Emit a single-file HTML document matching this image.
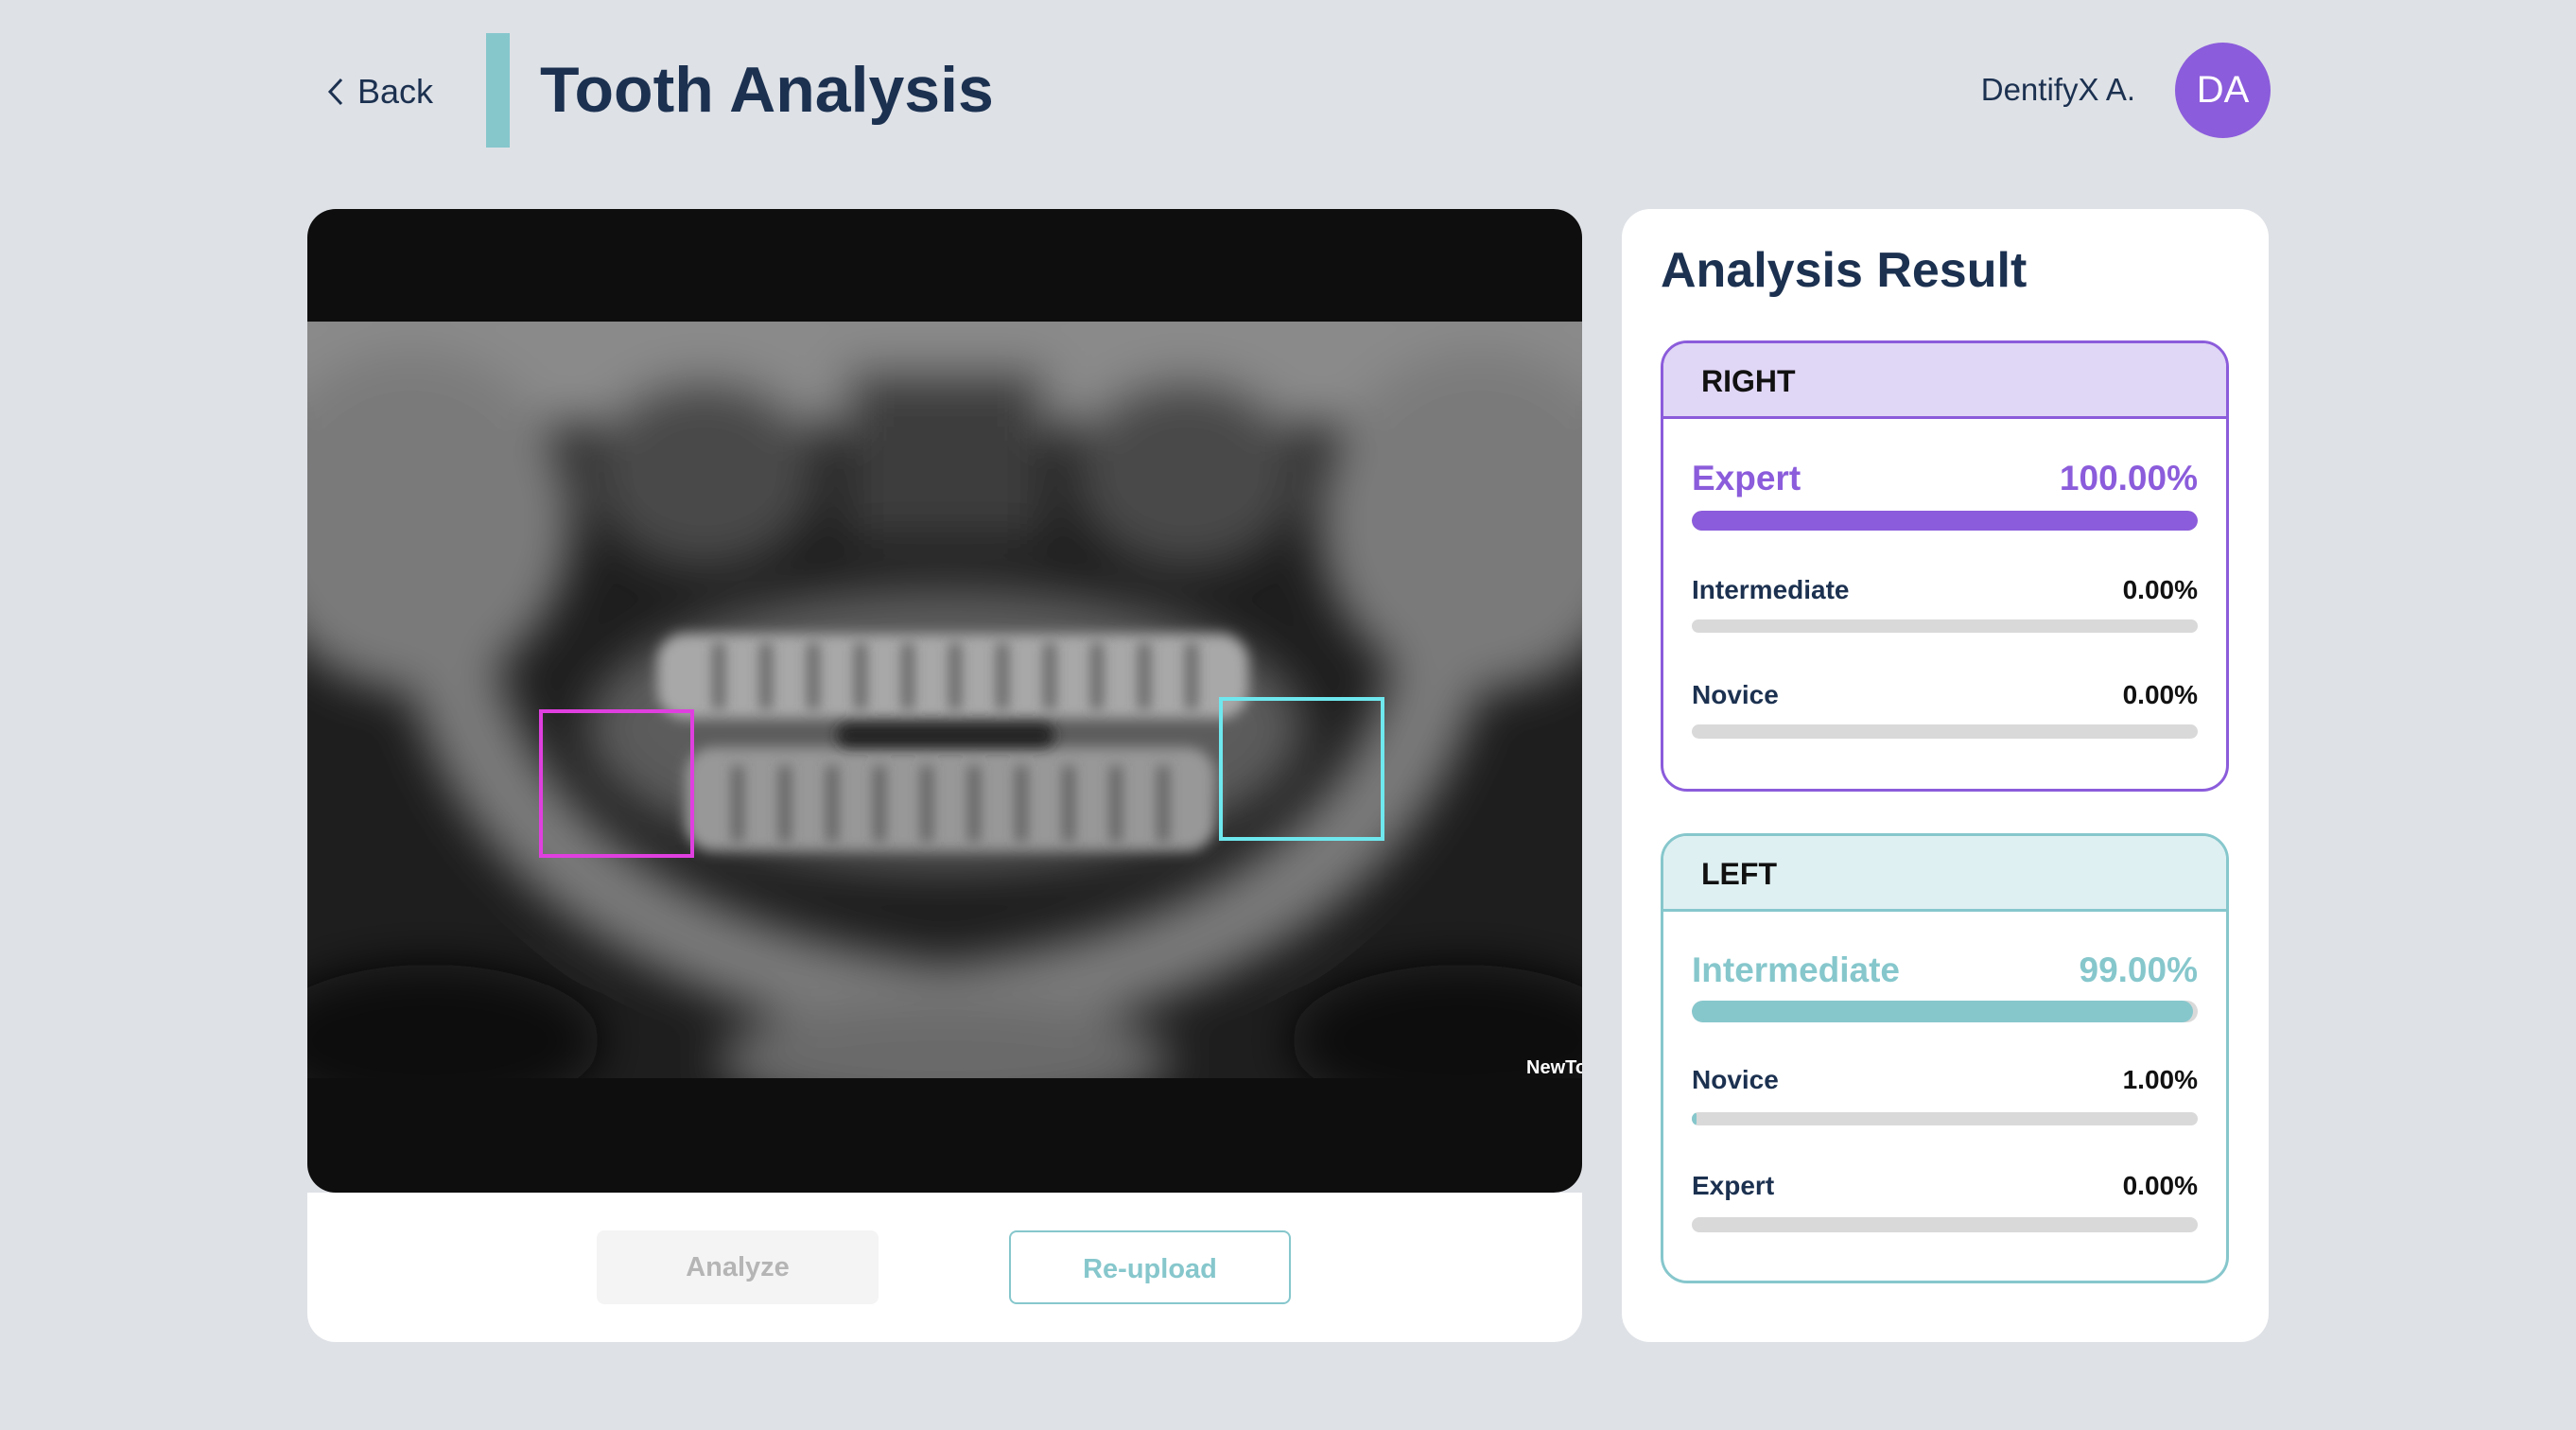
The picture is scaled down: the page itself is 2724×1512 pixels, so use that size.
<!DOCTYPE html>
<html><head><meta charset="utf-8"><style>
*{margin:0;padding:0;box-sizing:border-box}
body{width:2724px;height:1512px;background:#dee1e6;font-family:"Liberation Sans",sans-serif;position:relative;overflow:hidden;color:#1c3150}
.abs{position:absolute}
.back{left:344px;top:76px;font-size:36px;color:#1c3150}
.bar{left:514px;top:35px;width:25px;height:121px;background:#86c7cc}
.title{left:571px;top:56px;font-size:68px;font-weight:bold;letter-spacing:0px}
.user{right:466px;top:76px;font-size:33px}
.av{left:2300px;top:45px;width:101px;height:101px;border-radius:50%;background:#8b5cdb;color:#fff;font-size:40px;line-height:101px;text-align:center}
.img{left:325px;top:221px;width:1348px;height:1040px;background:#0e0e0e;border-radius:30px;overflow:hidden}
.xray{position:absolute;left:0;top:119px;width:1348px;height:800px;background:#1e1e1e;overflow:hidden}
.box{position:absolute;border:4px solid}
.bot{left:325px;top:1261px;width:1348px;height:158px;background:#fff;border-radius:0 0 30px 30px}
.btn{position:absolute;top:1301px;width:298px;height:78px;border-radius:8px;font-size:29px;font-weight:bold;text-align:center;line-height:78px}
.card{left:1715px;top:221px;width:684px;height:1198px;background:#fff;border-radius:30px}
.h2{left:1756px;top:256px;font-size:52px;font-weight:bold}
.grp{position:absolute;left:1756px;width:601px;border:3px solid;border-radius:28px;overflow:hidden}
.gh{height:80px;font-size:32px;font-weight:bold;color:#111;padding-left:40px;line-height:80px;border-bottom:3px solid}
.row{position:absolute;left:30px;right:30px;display:flex;justify-content:space-between;font-weight:bold}
.pb{position:absolute;left:30px;right:30px;background:#d9d9d9;border-radius:12px;overflow:hidden}
.pb i{display:block;height:100%;border-radius:12px}
</style></head><body>
<div class="abs back"><svg width="22" height="32" viewBox="0 0 22 32" style="vertical-align:-4px;margin-right:12px"><path d="M17 3 L5 16 L17 29" fill="none" stroke="#1c3150" stroke-width="3"/></svg>Back</div>
<div class="abs bar"></div>
<div class="abs title">Tooth Analysis</div>
<div class="abs user">DentifyX A.</div>
<div class="abs av">DA</div>
<div class="abs img"><div class="xray">
<svg width="1348" height="800" viewBox="0 0 1348 800" style="position:absolute;left:0;top:0">
<defs><filter id="b" x="-30%" y="-30%" width="160%" height="160%"><feGaussianBlur stdDeviation="24"/></filter><filter id="s" x="-20%" y="-20%" width="140%" height="140%"><feGaussianBlur stdDeviation="7"/></filter></defs>
<g filter="url(#b)">
<rect x="-50" y="-50" width="1448" height="160" fill="#8a8a8a"/>
<ellipse cx="110" cy="210" rx="170" ry="180" fill="#7a7a7a"/>
<ellipse cx="1240" cy="210" rx="170" ry="180" fill="#7a7a7a"/>
<ellipse cx="420" cy="160" rx="120" ry="100" fill="#4a4a4a"/>
<ellipse cx="930" cy="160" rx="120" ry="100" fill="#4a4a4a"/>
<rect x="570" y="50" width="210" height="180" fill="#3e3e3e"/>
<path d="M90 280 Q120 690 674 770 Q1228 690 1258 280 L1160 300 Q1120 620 674 680 Q228 620 188 300 Z" fill="#7a7a7a"/>
<ellipse cx="674" cy="430" rx="380" ry="150" fill="#5c5c5c"/>
<ellipse cx="674" cy="780" rx="240" ry="60" fill="#6a6a6a"/>
<ellipse cx="130" cy="760" rx="180" ry="80" fill="#111"/>
<ellipse cx="1220" cy="760" rx="180" ry="80" fill="#111"/>
</g>
<g filter="url(#s)" fill="#a8a8a8">
<rect x="370" y="330" width="625" height="90" rx="30"/>
<rect x="400" y="450" width="560" height="110" rx="30" fill="#989898"/>
</g>
<g fill="#555" filter="url(#s)">
<rect x="430" y="340" width="10" height="70"/><rect x="480" y="340" width="10" height="70"/><rect x="530" y="340" width="10" height="70"/><rect x="580" y="340" width="10" height="70"/><rect x="630" y="340" width="10" height="70"/><rect x="680" y="340" width="10" height="70"/><rect x="730" y="340" width="10" height="70"/><rect x="780" y="340" width="10" height="70"/><rect x="830" y="340" width="10" height="70"/><rect x="880" y="340" width="10" height="70"/><rect x="930" y="340" width="10" height="70"/>
<rect x="450" y="470" width="10" height="80"/><rect x="500" y="470" width="10" height="80"/><rect x="550" y="470" width="10" height="80"/><rect x="600" y="470" width="10" height="80"/><rect x="650" y="470" width="10" height="80"/><rect x="700" y="470" width="10" height="80"/><rect x="750" y="470" width="10" height="80"/><rect x="800" y="470" width="10" height="80"/><rect x="850" y="470" width="10" height="80"/><rect x="900" y="470" width="10" height="80"/>
<rect x="560" y="425" width="230" height="25" rx="12" fill="#222"/>
</g>
</svg>
<div class="box" style="left:245px;top:410px;width:164px;height:157px;border-color:#e03fe0"></div>
<div class="box" style="left:964px;top:397px;width:175px;height:152px;border-color:#6ee8ee"></div>
<div style="position:absolute;left:1289px;top:778px;color:#fff;font-size:20px;font-weight:bold">NewTo</div>
</div></div>
<div class="abs bot"></div>
<div class="btn" style="left:631px;background:#f4f4f4;color:#b5b5b5">Analyze</div>
<div class="btn" style="left:1067px;border:2px solid #86c7cc;color:#86c7cc;background:#fff">Re-upload</div>
<div class="abs card"></div>
<div class="abs h2">Analysis Result</div>
<div class="grp" style="top:360px;height:477px;border-color:#8b5cdb">
<div class="gh" style="background:#e0d6f5;border-color:#8b5cdb">RIGHT</div>
<div class="row" style="top:122px;font-size:37px;color:#8b5cdb"><span>Expert</span><span>100.00%</span></div>
<div class="pb" style="top:177px;height:21px"><i style="width:100%;background:#8b5cdb"></i></div>
<div class="row" style="top:245px;font-size:28px"><span>Intermediate</span><span style="color:#111">0.00%</span></div>
<div class="pb" style="top:292px;height:14px"></div>
<div class="row" style="top:356px;font-size:28px"><span>Novice</span><span style="color:#111">0.00%</span></div>
<div class="pb" style="top:403px;height:15px"></div>
</div>
<div class="grp" style="top:881px;height:476px;border-color:#86c7cc">
<div class="gh" style="background:#dff0f2;border-color:#86c7cc">LEFT</div>
<div class="row" style="top:121px;font-size:37px;color:#86c7cc"><span>Intermediate</span><span>99.00%</span></div>
<div class="pb" style="top:174px;height:23px"><i style="width:99%;background:#86c7cc"></i></div>
<div class="row" style="top:242px;font-size:28px"><span>Novice</span><span style="color:#111">1.00%</span></div>
<div class="pb" style="top:292px;height:14px"><i style="width:1%;background:#86c7cc"></i></div>
<div class="row" style="top:354px;font-size:28px"><span>Expert</span><span style="color:#111">0.00%</span></div>
<div class="pb" style="top:403px;height:16px"></div>
</div>
</body></html>
